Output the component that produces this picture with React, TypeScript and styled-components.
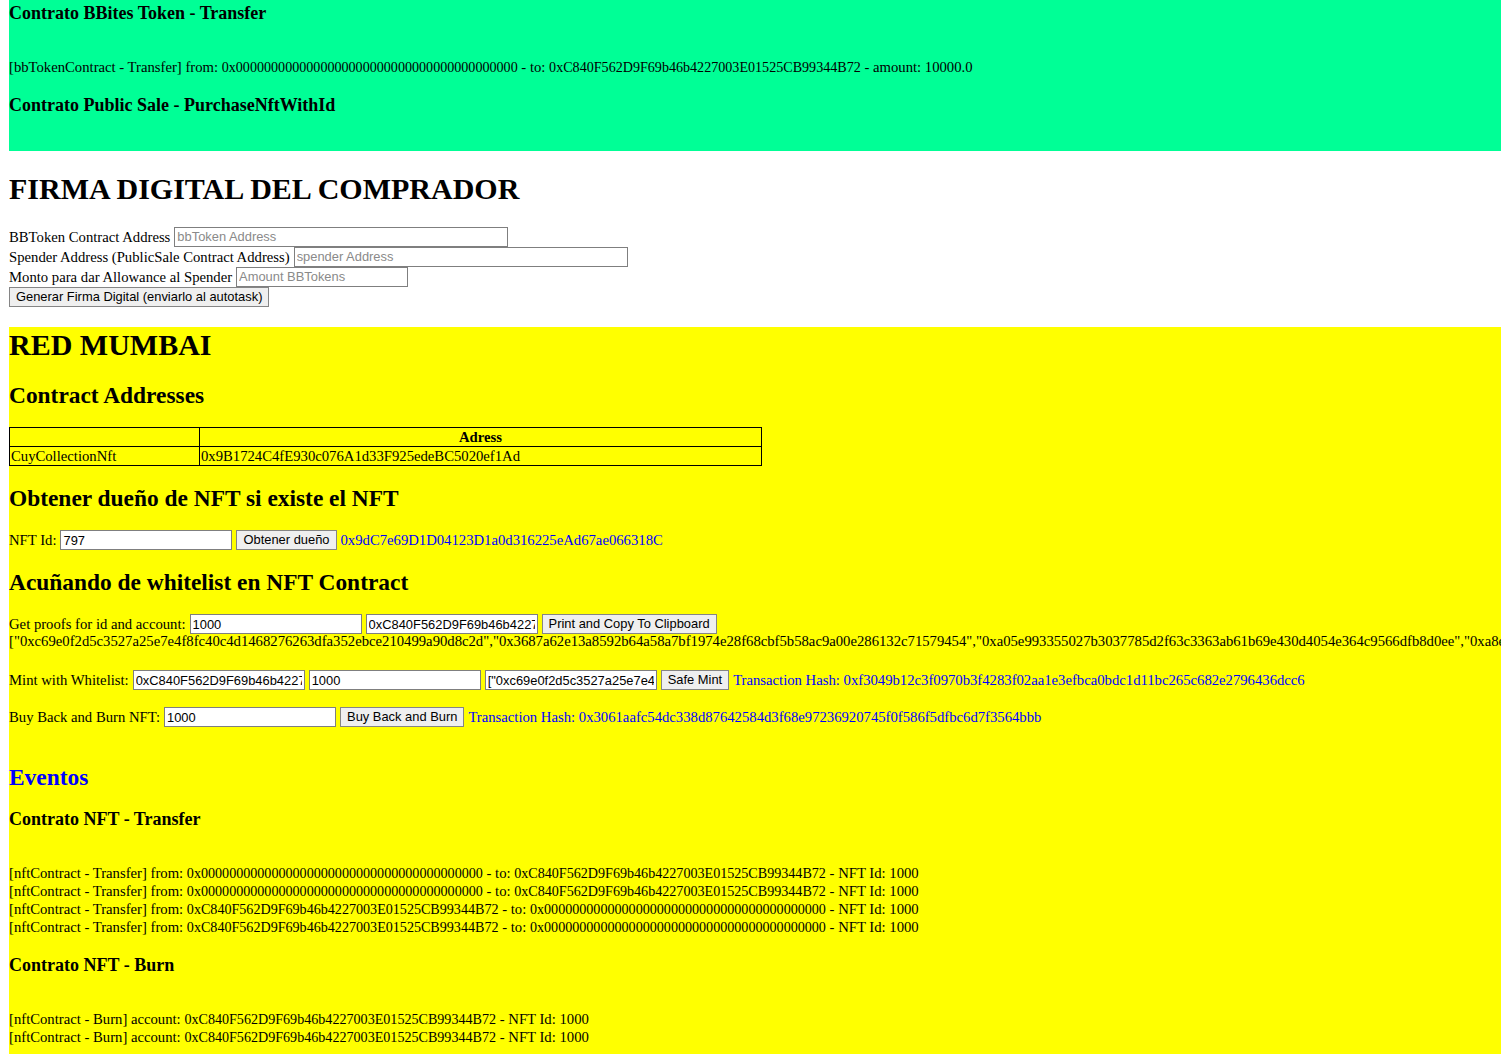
import React from "react";
import styled, { createGlobalStyle } from "styled-components";

const Global = createGlobalStyle`
  html { overflow: hidden; }
  body {
    margin: 0 0 0 9px;
    background: #ffffff;
    color: #000000;
    font-family: "Liberation Serif", "Times New Roman", serif;
    font-size: 14.7px;
    line-height: 18px;
  }
`;

const Section = styled.section<{ $bg?: string; $padBottom?: number }>`
  display: flow-root;
  background: ${(p) => p.$bg || "transparent"};
  padding-bottom: ${(p) => p.$padBottom ?? 0}px;
  overflow: hidden;
`;

const H1 = styled.h1<{ $mt?: number }>`
  font-size: 30px;
  line-height: 36px;
  font-weight: bold;
  margin: ${(p) => p.$mt ?? 19}px 0 19px;
`;

const H2 = styled.h2<{ $blue?: boolean; $mt?: number; $mb?: number }>`
  font-size: 23.4px;
  line-height: 27px;
  font-weight: bold;
  color: ${(p) => (p.$blue ? "#0000ff" : "#000")};
  margin: ${(p) => p.$mt ?? 18.5}px 0 ${(p) => p.$mb ?? 18.5}px;
`;

const H3 = styled.h3<{ $mt?: number }>`
  font-size: 18px;
  line-height: 22px;
  font-weight: bold;
  margin: ${(p) => p.$mt ?? 18}px 0 18px;
`;

const EventList = styled.div`
  margin: 34px 0 18px;
`;

const EventLine = styled.div`
  white-space: nowrap;
  line-height: 18px;
`;

const Hex = styled.span`
  font-size: 14.1px;
`;

const Form = styled.div`
  display: flex;
  flex-direction: column;
  margin: 20px 0 20px;
`;

const Row = styled.div<{ $mt?: number }>`
  display: flex;
  align-items: center;
  gap: 4px;
  height: 20px;
  white-space: nowrap;
  margin-top: ${(p) => p.$mt ?? 0}px;
`;

const Label = styled.span``;

const Input = styled.input<{ $w?: number }>`
  box-sizing: border-box;
  width: ${(p) => p.$w ?? 172}px;
  height: 20px;
  padding: 1px 2px;
  border: 1px solid #7f7f7f;
  border-radius: 0;
  background: #fff;
  font-family: "Liberation Sans", Arial, sans-serif;
  font-size: 12.9px;
  color: #000;
  outline: none;
  &::placeholder {
    color: #8a8a8a;
  }
`;

const Button = styled.button`
  box-sizing: border-box;
  height: 20px;
  padding: 0 6px;
  border: 1px solid #858585;
  border-radius: 0;
  background: #efefef;
  font-family: "Liberation Sans", Arial, sans-serif;
  font-size: 12.9px;
  color: #000;
  line-height: 16px;
`;

const Blue = styled.span`
  color: #0000ff;
`;

const ProofText = styled.div`
  white-space: nowrap;
  line-height: 14px;
`;

const Table = styled.table`
  border-collapse: collapse;
  width: 753px;
  margin: 18.5px 0;
`;

const Th = styled.th<{ $w?: number }>`
  border: 1px solid #000;
  padding: 0 1px;
  height: 18px;
  line-height: 18px;
  font-weight: bold;
  text-align: center;
  width: ${(p) => (p.$w ? `${p.$w}px` : "auto")};
`;

const Td = styled.td`
  border: 1px solid #000;
  padding: 0 1px;
  height: 18px;
  line-height: 18px;
  text-align: left;
`;

const ZERO = "0x" + "0".repeat(40);
const ACC = "0xC840F562D9F69b46b4227003E01525CB99344B72";
const PROOF =
  '["0xc69e0f2d5c3527a25e7e4f8fc40c4d1468276263dfa352ebce210499a90d8c2d","0x3687a62e13a8592b64a58a7bf1974e28f68cbf5b58ac9a00e286132c71579454","0xa05e993355027b3037785d2f63c3363ab61b69e430d4054e364c9566dfb8d0ee","0xa8e78c35b1f2d0c7e8a9b3c4d5e6f7a8b9c0d1e2f3a4b5c6d7e8f9a0b1c2d3e4"]';

const transfers = [
  { from: ZERO, to: ACC },
  { from: ZERO, to: ACC },
  { from: ACC, to: ZERO },
  { from: ACC, to: ZERO },
];

export default function App() {
  return (
    <>
      <Global />
      <Section $bg="#00ff96" $padBottom={17}>
        <H3 $mt={2}>Contrato BBites Token - Transfer</H3>
        <EventList>
          <EventLine>
            [bbTokenContract - Transfer] from: <Hex>{ZERO}</Hex> - to: <Hex>{ACC}</Hex> - amount: 10000.0
          </EventLine>
        </EventList>
        <H3>Contrato Public Sale - PurchaseNftWithId</H3>
      </Section>

      <Section>
        <H1 $mt={19.5}>FIRMA DIGITAL DEL COMPRADOR</H1>
        <Form>
          <Row>
            <Label>BBToken Contract Address</Label>
            <Input $w={334} placeholder="bbToken Address" />
          </Row>
          <Row>
            <Label>Spender Address (PublicSale Contract Address)</Label>
            <Input $w={334} placeholder="spender Address" />
          </Row>
          <Row>
            <Label>Monto para dar Allowance al Spender</Label>
            <Input $w={172} placeholder="Amount BBTokens" />
          </Row>
          <Row>
            <Button>Generar Firma Digital (enviarlo al autotask)</Button>
          </Row>
        </Form>
      </Section>

      <Section $bg="#ffff00" $padBottom={40}>
        <H1 $mt={0}>RED MUMBAI</H1>
        <H2>Contract Addresses</H2>
        <Table>
          <thead>
            <tr>
              <Th $w={187}></Th>
              <Th>Adress</Th>
            </tr>
          </thead>
          <tbody>
            <tr>
              <Td>CuyCollectionNft</Td>
              <Td>0x9B1724C4fE930c076A1d33F925edeBC5020ef1Ad</Td>
            </tr>
          </tbody>
        </Table>
        <H2>Obtener dueño de NFT si existe el NFT</H2>
        <Row>
          <Label>NFT Id:</Label>
          <Input defaultValue="797" />
          <Button>Obtener dueño</Button>
          <Blue>0x9dC7e69D1D04123D1a0d316225eAd67ae066318C</Blue>
        </Row>
        <H2>Acuñando de whitelist en NFT Contract</H2>
        <Row>
          <Label>Get proofs for id and account:</Label>
          <Input defaultValue="1000" />
          <Input defaultValue={ACC} />
          <Button>Print and Copy To Clipboard</Button>
        </Row>
        <ProofText>{PROOF}</ProofText>
        <Row $mt={22}>
          <Label>Mint with Whitelist:</Label>
          <Input defaultValue={ACC} />
          <Input defaultValue="1000" />
          <Input defaultValue={PROOF} />
          <Button>Safe Mint</Button>
          <Blue>
            Transaction Hash: 0xf3049b12c3f0970b3f4283f02aa1e3efbca0bdc1d11bc265c682e2796436dcc6
          </Blue>
        </Row>
        <Row $mt={17}>
          <Label>Buy Back and Burn NFT:</Label>
          <Input defaultValue="1000" />
          <Button>Buy Back and Burn</Button>
          <Blue>
            Transaction Hash: 0x3061aafc54dc338d87642584d3f68e97236920745f0f586f5dfbc6d7f3564bbb
          </Blue>
        </Row>
        <H2 $blue $mt={37} $mb={17}>Eventos</H2>
        <H3 $mt={17}>Contrato NFT - Transfer</H3>
        <EventList>
          {transfers.map((t, i) => (
            <EventLine key={i}>
              [nftContract - Transfer] from: <Hex>{t.from}</Hex> - to: <Hex>{t.to}</Hex> - NFT Id: 1000
            </EventLine>
          ))}
        </EventList>
        <H3>Contrato NFT - Burn</H3>
        <EventList>
          <EventLine>
            [nftContract - Burn] account: <Hex>{ACC}</Hex> - NFT Id: 1000
          </EventLine>
          <EventLine>
            [nftContract - Burn] account: <Hex>{ACC}</Hex> - NFT Id: 1000
          </EventLine>
        </EventList>
      </Section>
    </>
  );
}
